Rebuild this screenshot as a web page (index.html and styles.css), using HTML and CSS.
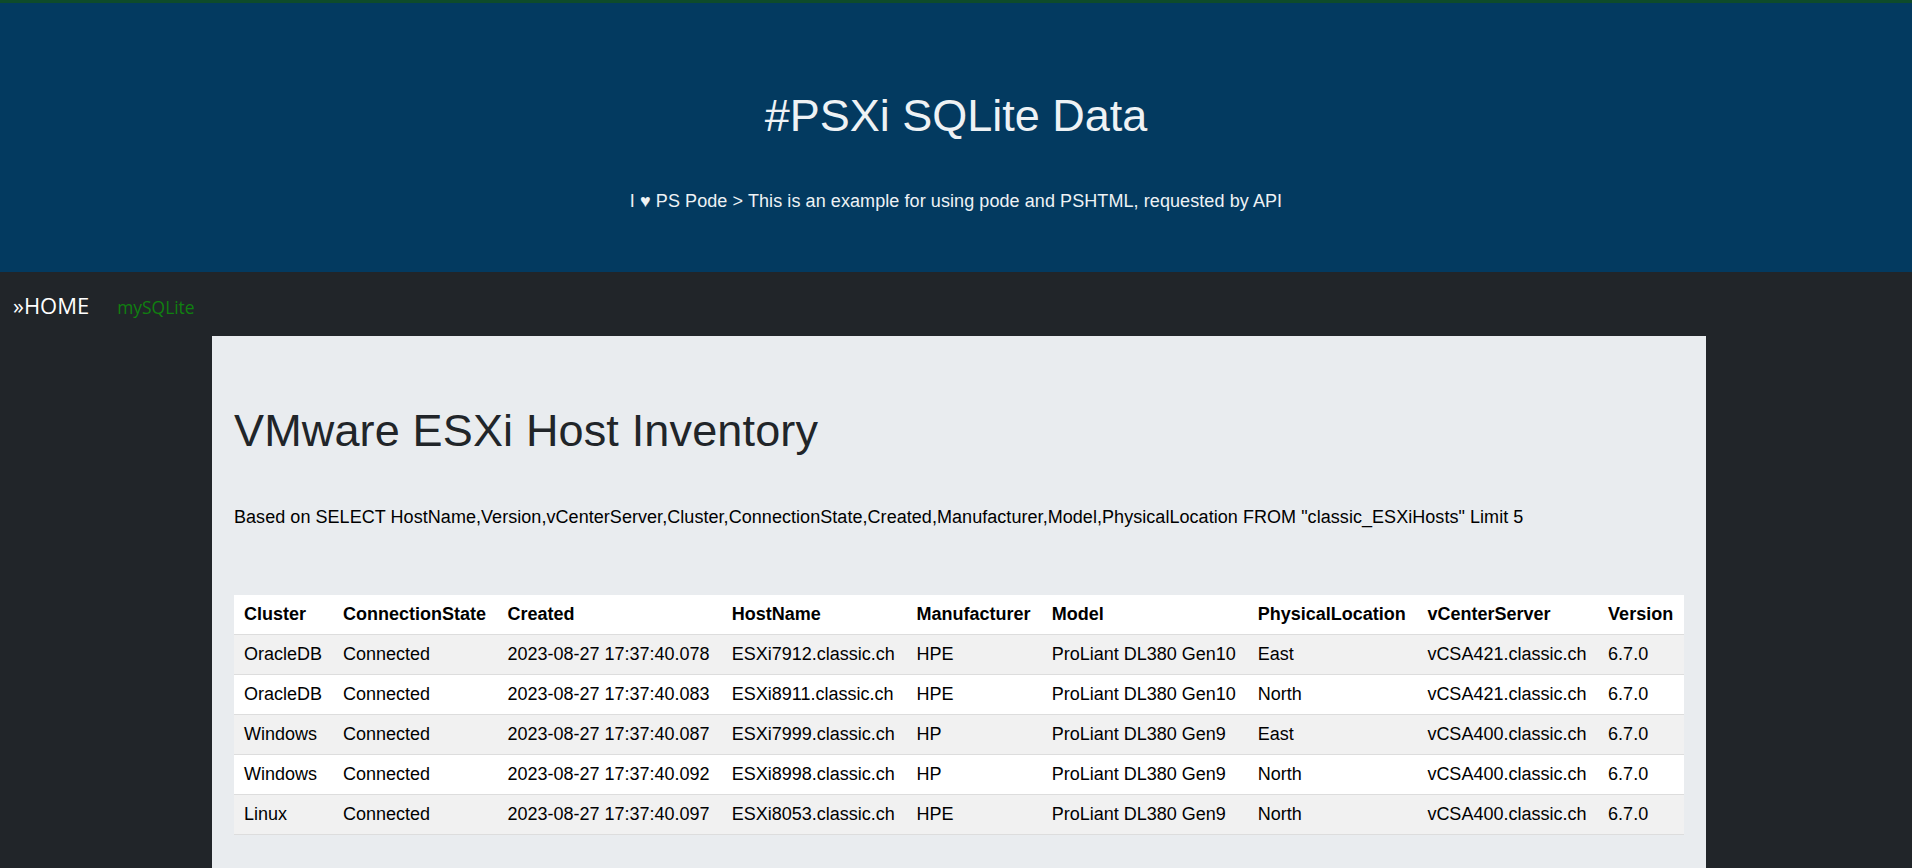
FILE: index.html
```html
<!DOCTYPE html>
<html lang="en">
<head>
<meta charset="utf-8">
<title>#PSXi SQLite Data</title>
<link rel="stylesheet" href="styles.css">
</head>
<body>
<header class="site-header">
  <h1 class="site-title">#PSXi SQLite Data</h1>
  <p class="site-sub">I &hearts; PS Pode &gt; This is an example for using pode and PSHTML, requested by API</p>
</header>
<nav class="topnav">
  <a class="nav-home" href="#">&raquo;HOME</a>
  <a class="nav-link" href="#">mySQLite</a>
</nav>
<main class="content">
  <h2 class="page-title">VMware ESXi Host Inventory</h2>
  <p class="query">Based on SELECT HostName,Version,vCenterServer,Cluster,ConnectionState,Created,Manufacturer,Model,PhysicalLocation FROM "classic_ESXiHosts" Limit 5</p>
  <table class="inventory">
    <thead>
      <tr>
        <th>Cluster</th><th>ConnectionState</th><th>Created</th><th>HostName</th><th>Manufacturer</th><th>Model</th><th>PhysicalLocation</th><th>vCenterServer</th><th>Version</th>
      </tr>
    </thead>
    <tbody>
      <tr><td>OracleDB</td><td>Connected</td><td>2023-08-27 17:37:40.078</td><td>ESXi7912.classic.ch</td><td>HPE</td><td>ProLiant DL380 Gen10</td><td>East</td><td>vCSA421.classic.ch</td><td>6.7.0</td></tr>
      <tr><td>OracleDB</td><td>Connected</td><td>2023-08-27 17:37:40.083</td><td>ESXi8911.classic.ch</td><td>HPE</td><td>ProLiant DL380 Gen10</td><td>North</td><td>vCSA421.classic.ch</td><td>6.7.0</td></tr>
      <tr><td>Windows</td><td>Connected</td><td>2023-08-27 17:37:40.087</td><td>ESXi7999.classic.ch</td><td>HP</td><td>ProLiant DL380 Gen9</td><td>East</td><td>vCSA400.classic.ch</td><td>6.7.0</td></tr>
      <tr><td>Windows</td><td>Connected</td><td>2023-08-27 17:37:40.092</td><td>ESXi8998.classic.ch</td><td>HP</td><td>ProLiant DL380 Gen9</td><td>North</td><td>vCSA400.classic.ch</td><td>6.7.0</td></tr>
      <tr><td>Linux</td><td>Connected</td><td>2023-08-27 17:37:40.097</td><td>ESXi8053.classic.ch</td><td>HPE</td><td>ProLiant DL380 Gen9</td><td>North</td><td>vCSA400.classic.ch</td><td>6.7.0</td></tr>
    </tbody>
  </table>
</main>
</body>
</html>
```
FILE: styles.css
```css
html, body {
  margin: 0;
  padding: 0;
}
body {
  background: #212529;
  font-family: "Liberation Sans", Arial, sans-serif;
  font-size: 18px;
  color: #000;
}
.site-header {
  background: #033a60;
  border-top: 3px solid #0e4b2b;
  text-align: center;
  color: #eef2f5;
  padding: 88px 0 60px;
}
.site-title {
  margin: 0;
  font-size: 45px;
  font-weight: normal;
  line-height: 50px;
}
.site-sub {
  margin: 50px 0 0;
  line-height: 21px;
  letter-spacing: 0.08px;
}
.topnav {
  display: flex;
  align-items: baseline;
  gap: 28px;
  height: 64px;
  box-sizing: border-box;
  padding: 18px 13px 0;
  font-family: "Open Sans", "Noto Sans", sans-serif;
}
.nav-home {
  color: #fff;
  text-decoration: none;
  font-size: 22px;
}
.nav-link {
  color: #108010;
  text-decoration: none;
  font-size: 17.4px;
}
.content {
  margin: 0 206px 0 212px;
  background: #e9ecef;
  padding: 69px 22px 60px;
}
.page-title {
  margin: 0;
  font-size: 45px;
  font-weight: normal;
  line-height: 52px;
  color: #212529;
  letter-spacing: 0.15px;
}
.query {
  margin: 50px 0 67px;
  line-height: 21px;
  letter-spacing: 0.05px;
}
.inventory {
  width: 100%;
  border-collapse: collapse;
}
.inventory th,
.inventory td {
  padding: 9px 10px;
  line-height: 21px;
  text-align: left;
  white-space: nowrap;
}
.inventory tr {
  border-bottom: 1px solid #dddddd;
}
.inventory thead tr {
  background: #ffffff;
}
.inventory tbody tr:nth-child(odd) {
  background: #f1f1f1;
}
.inventory tbody tr:nth-child(even) {
  background: #ffffff;
}
```
